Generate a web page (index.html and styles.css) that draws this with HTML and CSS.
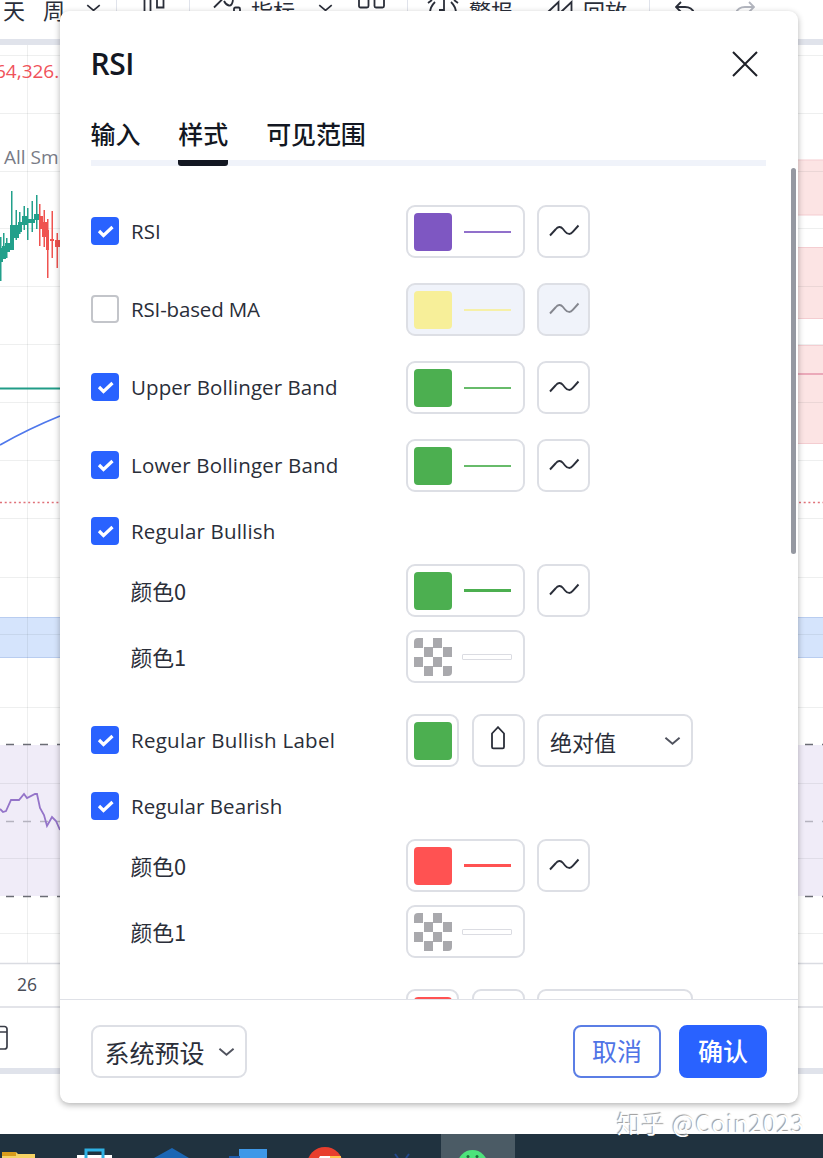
FILE: index.html
```
<!DOCTYPE html>
<html lang="zh-CN">

<head>
    <meta charset="UTF-8">
    <title>RSI</title>
    <link rel="stylesheet" href="styles.css">
</head>

<body>

    <!-- shared icons -->
    <svg class="icon-defs" width="0" height="0">
        <symbol id="check" viewBox="0 0 28 28">
            <path d="M8 14l4.500 4.500L21.500 10" fill="none" stroke="#fff" stroke-width="3.200" />
        </symbol>
        <symbol id="wave" viewBox="0 0 32 16">
            <path d="M2 13.500L7.500 7.500C10 4.500 12.500 4 15 7L17 9.500C19.500 12.700 22.500 12.700 25 9.700L30.500 3.500" fill="none" stroke="currentColor" stroke-width="1.900" />
        </symbol>
        <symbol id="chevron" viewBox="0 0 18 10">
            <path d="M1.500 1.500L9 8l7.500-6.500" fill="none" stroke="currentColor" stroke-width="2" />
        </symbol>
        <symbol id="tag" viewBox="0 0 14 24">
            <path d="M1 7.500L7 1.200l6 6.300v13.500a1.300 1.300 0 0 1-1.300 1.300H2.300A1.300 1.300 0 0 1 1 21z" fill="none" stroke="currentColor" stroke-width="1.800" />
        </symbol>
    </svg>

    <div class="page">
        <div class="toolbar">
            <span class="day">天</span>
            <span class="week">周</span>
            <svg class="arrow" width="15" height="10"><use href="#chevron" /></svg>
            <i class="sep"></i>
            <svg class="candles" width="24" height="22" viewBox="0 0 24 22" fill="none" stroke="#2a2e39" stroke-width="1.800"><path d="M1.500 0v22M7.500 0v22M14 0v8.500h6.500V0" /></svg>
            <i class="sep"></i>
            <svg class="fx" width="30" height="22" viewBox="0 0 30 22" fill="none" stroke="#2a2e39" stroke-width="1.800"><path d="M1 8.500l8-8M11 2q2 4 5 4.500T20 1M21 14v-4q0-1.500 1.500-1.500h3q1.500 0 1.500 1.500v4" /></svg>
            <span>指标</span>
            <svg class="arrow2" width="15" height="10"><use href="#chevron" /></svg>
            <svg class="layout" width="28" height="22" viewBox="0 0 28 22" fill="none" stroke="#2a2e39" stroke-width="1.800"><rect x="1" y="-3" width="9.500" height="11.500" rx="1.500" /><rect x="16.500" y="-3" width="9.500" height="11.500" rx="1.500" /></svg>
            <i class="sep sep3"></i>
            <svg class="alarm" width="32" height="22" viewBox="0 0 32 22" fill="none" stroke="#2a2e39" stroke-width="1.800"><path d="M1 4l4-3M31 4l-4-3M3 14q0-6 5-11M29 14q0-6-5-11M17 1v10h-5" /></svg>
            <span class="alarm-text">警报</span>
            <svg class="rewind" width="27" height="22" viewBox="0 0 27 22" fill="none" stroke="#2a2e39" stroke-width="1.800"><path d="M1 13L11.500 3v14M14 13L24.500 3v14" /></svg>
            <span>回放</span>
            <i class="sep sep4"></i>
            <svg class="undo" width="20" height="20" viewBox="0 0 20 20" fill="none" stroke="#2a2e39" stroke-width="1.800"><path d="M6 2L1 7l5 5M1 7h9q7 0 9 6" /></svg>
            <svg class="redo" width="20" height="20" viewBox="0 0 20 20" fill="none" stroke="#b2b5be" stroke-width="1.800"><path d="M14 2l5 5-5 5M19 7h-9q-7 0-9 6" /></svg>
        </div>

        <svg class="chart" width="823" height="1089" viewBox="0 45 823 1089">
            <!-- zones -->
            <g fill="#fce4e4" stroke="#f4cdd1">
                <path d="M790 160h40v55h-40zM790 247.500h40v71h-40zM790 345.500h40v98h-40z" />
            </g>
            <path d="M-2 617.500h827v40H-2z" fill="#d5e4fc" stroke="#b9cdf0" />
            <path d="M0 745h823v151H0z" fill="#f0ecf8" />

            <!-- grid -->
            <path d="M27.500 45v918M0 55.500h823M0 113.500h823M0 171.500h823M0 228.500h823M0 286.500h823M0 344.500h823M0 402.500h823M0 460.500h823M0 518.500h823M0 577.500h823M0 634.500h823M0 707.500h823M0 783.500h823M0 858.500h823M0 933.500h823" stroke="#2a2e39" stroke-opacity=".08" />

            <!-- candles -->
            <g fill="#22a08b">
                <path d="M0 237h1.500v44H0zM3 233h1.500v20H3zM6 238h1.500v20H6zM11 191h1.500v58H11zM15.500 210h1.500v30h-1.500zM19 212h1.500v22H19zM23.500 206h1.500v24h-1.500zM27 208h1.500v32H27zM31.500 201h1.500v31h-1.500zM36 195h1.500v34H36z" />
                <path d="M0 248h3v14H0zM2 246h4v13H2zM5 243h5v9H5zM10 225h4v25h-4zM13 225h6v13h-6zM18 222h4v10h-4zM22 216h6v9h-6zM28 219h7v4h-7zM34 214h6v6h-6z" />
            </g>
            <g fill="#ef5350">
                <path d="M39 204h1.500v42H39zM43.500 210h1.500v37h-1.500zM47 219h1.500v59H47zM51.500 211h1.500v47h-1.500zM56.500 233h1.500v35h-1.500z" />
                <path d="M39 216h4v13h-4zM42 222h5v15h-5zM46 230h3v20h-3zM50 239h4v2h-4zM55 240h5v7h-5z" />
            </g>

            <g fill="none">
                <path d="M0 388.500h60" stroke="#219c87" stroke-width="1.800" />
                <path d="M0 445Q28 429 60 416" stroke="#4f78ec" stroke-width="1.800" />
                <path d="M0 502.500h823" stroke="#e07078" stroke-width="1.500" stroke-dasharray="2 2.700" />
                <path d="M790 374h40" stroke="#eba9b9" stroke-width="1.800" />
                <path d="M-11 744.500h834M-11 896.500h834" stroke="#6b6d75" stroke-width="1.400" stroke-dasharray="8 9" />
                <path d="M-11 821.500h834" stroke="#b5b3bf" stroke-width="1.400" stroke-dasharray="8 9" />
                <path d="M0 809l3 3 3-1 5-11h8l5-6 3 4 8-4 2 0 3 14 4 7 3 11 5-9 4 4 4 9" stroke="#9474c9" stroke-width="1.800" />
            </g>

            <!-- axis and bottom panel -->
            <path d="M0 963.500h823M0 1007h823" stroke="#dadce2" stroke-width="1.500" />
            <path d="M0 1068h823v6H0z" fill="#e0e3eb" />
            <text x="17" y="991" class="axis-label">26</text>
            <path d="M-8 1026.500H4.500a2.500 2.500 0 0 1 2.500 2.500v17.500a2.500 2.500 0 0 1-2.500 2.500H-8M-8 1032H7" fill="none" stroke="#3a3d47" stroke-width="1.700" />
            <text x="-5" y="78" class="price">64,326.</text>
            <text x="4" y="164" class="study">All Sm</text>
        </svg>

        <div class="taskbar">
            <svg width="823" height="24" viewBox="0 0 823 24">
                <path d="M441 0h74v24h-74z" fill="#4b5b65" />
                <path d="M2 18h14l2 2h17v4H2z" fill="#f6d365" />
                <path d="M2 18h14v4H2z" fill="#d99c1b" />
                <path d="M77 21h35v3H77z" fill="#fff" />
                <path d="M86 24v-8h17v8" fill="none" stroke="#2fb1e4" stroke-width="3" />
                <path d="M154 24l18-10 17 10z" fill="#1b66b4" />
                <path d="M239 15h28v9h-28z" fill="#3f98e8" />
                <path d="M229 22h11v2h-11z" fill="#1d5aa8" />
                <circle cx="325" cy="31" r="18" fill="#e83e2d" />
                <path d="M321 22h20v2h-22z" fill="#ffc24a" />
                <path d="M320 22h10v2h-11z" fill="#fff" />
                <path d="M395 20l3 4M409 20l-3 4" stroke="#24488a" stroke-width="2" />
                <circle cx="472.500" cy="31" r="15" fill="#4de37b" />
                <circle cx="468" cy="22.500" r="1.500" fill="#1d6b3a" />
                <circle cx="477" cy="22.500" r="1.500" fill="#1d6b3a" />
            </svg>
        </div>
    </div>

    <div class="dialog">
        <div class="header">
            <h2>RSI</h2>
            <svg class="close" width="26" height="26" viewBox="0 0 26 26"><path d="M1 1l24 24M25 1L1 25" stroke="#1e2028" stroke-width="2" /></svg>
        </div>

        <div class="tabs">
            <span class="tab">输入</span>
            <span class="tab active">样式</span>
            <span class="tab">可见范围</span>
        </div>

        <div class="content">
            <div class="row">
                <div class="name"><svg class="checkbox on"><use href="#check" /></svg><span>RSI</span></div>
                <div class="box line purple"><i class="swatch"></i><i class="stroke"></i></div>
                <div class="box"><svg class="wave"><use href="#wave" /></svg></div>
            </div>
            <div class="row plot">
                <div class="name"><i class="checkbox"></i><span class="tight">RSI-based MA</span></div>
                <div class="box line yellow disabled"><i class="swatch"></i><i class="stroke"></i></div>
                <div class="box disabled"><svg class="wave"><use href="#wave" /></svg></div>
            </div>
            <div class="row plot">
                <div class="name"><svg class="checkbox on"><use href="#check" /></svg><span>Upper Bollinger Band</span></div>
                <div class="box line green"><i class="swatch"></i><i class="stroke"></i></div>
                <div class="box"><svg class="wave"><use href="#wave" /></svg></div>
            </div>
            <div class="row plot">
                <div class="name"><svg class="checkbox on"><use href="#check" /></svg><span class="wide">Lower Bollinger Band</span></div>
                <div class="box line green"><i class="swatch"></i><i class="stroke"></i></div>
                <div class="box"><svg class="wave"><use href="#wave" /></svg></div>
            </div>

            <div class="row">
                <div class="name"><svg class="checkbox on"><use href="#check" /></svg><span class="wide">Regular Bullish</span></div>
            </div>
            <div class="row first-color">
                <div class="name color-name">颜色0</div>
                <div class="box line green thick"><i class="swatch"></i><i class="stroke"></i></div>
                <div class="box"><svg class="wave"><use href="#wave" /></svg></div>
            </div>
            <div class="row">
                <div class="name color-name">颜色1</div>
                <div class="box line empty"><i class="swatch"></i><i class="stroke"></i></div>
            </div>
            <div class="row label-row">
                <div class="name"><svg class="checkbox on"><use href="#check" /></svg><span class="wider">Regular Bullish Label</span></div>
                <div class="box green"><i class="swatch"></i></div>
                <div class="box"><svg class="tag"><use href="#tag" /></svg></div>
                <div class="box select"><span>绝对值</span><svg class="chevron"><use href="#chevron" /></svg></div>
            </div>

            <div class="row">
                <div class="name"><svg class="checkbox on"><use href="#check" /></svg><span>Regular Bearish</span></div>
            </div>
            <div class="row first-color">
                <div class="name color-name">颜色0</div>
                <div class="box line red thick"><i class="swatch"></i><i class="stroke"></i></div>
                <div class="box"><svg class="wave"><use href="#wave" /></svg></div>
            </div>
            <div class="row">
                <div class="name color-name">颜色1</div>
                <div class="box line empty"><i class="swatch"></i><i class="stroke"></i></div>
            </div>
            <div class="row label-row">
                <div class="name"></div>
                <div class="box red"><i class="swatch"></i></div>
                <div class="box"></div>
                <div class="box select"></div>
            </div>
            <div class="scrollbar"></div>
        </div>

        <div class="footer">
            <div class="box select preset"><span>系统预设</span><svg class="chevron"><use href="#chevron" /></svg></div>
            <button class="cancel">取消</button>
            <button class="ok">确认</button>
        </div>
    </div>

    <div class="watermark">知乎 @Coin2023</div>

</body>

</html>
```

FILE: styles.css
```
* {
    box-sizing: border-box;
}

body {
    margin: 0;
    position: relative;
    width: 823px;
    height: 1158px;
    overflow: hidden;
    background: #fff;
    color: #2a2e39;
    font-family: "Open Sans", "Noto Sans CJK SC", sans-serif;
}

svg {
    display: block;
    flex: none;
}

.icon-defs {
    position: absolute;
}

.page {
    display: flex;
    flex-direction: column;
}

/* top toolbar */
.toolbar {
    display: flex;
    align-items: center;
    height: 45px;
    padding: 0 0 20px 3px;
    border-bottom: 6px solid #e0e3eb;
    font-family: "Noto Sans CJK SC", sans-serif;
    font-size: 22px;
    line-height: 22px;
    white-space: nowrap;
}

.toolbar span {
    flex: none;
}

.toolbar .day,
.toolbar .week {
    margin-top: -2px;
}

.week {
    margin-left: 18px;
}

.arrow {
    margin: -4px 0 0 21px;
}

.sep {
    flex: none;
    width: 1px;
    height: 22px;
    margin-left: 15px;
    background: #e0e3eb;
}

.candles {
    margin: 0 7px 0 26px;
}

.fx {
    margin: 0 8px 0 23px;
}

.arrow2 {
    margin: -4px 0 0 23px;
}

.layout {
    margin-left: 25px;
}

.sep3 {
    margin-left: 21px;
}

.alarm {
    margin-left: 19px;
}

.alarm-text {
    margin-left: 10px;
}

.rewind {
    margin: 0 9px 0 34px;
}

.sep4 {
    margin-left: 22px;
}

.undo {
    margin-left: 25px;
}

.redo {
    margin-left: 40px;
}

/* chart behind the dialog */
.axis-label,
.price,
.study {
    font-family: "Open Sans", sans-serif;
    font-size: 18.500px;
    fill: #4a4d57;
}

.axis-label {
    font-size: 17.500px;
}

.price {
    fill: #f0525a;
    font-size: 19px;
}

.study {
    fill: #787b86;
    font-size: 19px;
}

.taskbar {
    height: 24px;
    background: #20323f;
}

/* dialog */
.dialog {
    position: absolute;
    left: 59.500px;
    top: 11px;
    width: 738.500px;
    height: 1092px;
    display: flex;
    flex-direction: column;
    background: #fff;
    border-radius: 9px;
    box-shadow: 0 2px 6px rgba(0, 0, 0, 0.3);
}

.header {
    display: flex;
    align-items: center;
    justify-content: space-between;
    height: 106px;
    padding: 0 40px 0 31px;
}

h2 {
    margin: -2px 0 0;
    color: #131722;
    font-size: 30px;
    font-weight: 600;
    letter-spacing: -0.5px;
}

.tabs {
    display: flex;
    gap: 38px;
    height: 50px;
    margin: -1px 32px 0 31px;
    border-bottom: 6px solid #f0f3fa;
}

.tab {
    height: 50px;
    color: #131722;
    font-family: "Noto Sans CJK SC", sans-serif;
    font-size: 25px;
    font-weight: 500;
    line-height: 34px;
    letter-spacing: -0.100px;
}

.active {
    border-bottom: 6px solid #131722;
    border-radius: 3px;
}

.content {
    position: relative;
    display: flex;
    flex-direction: column;
    flex: 1;
    gap: 13px;
    min-height: 0;
    padding: 39px 0 0 31px;
    overflow: hidden;
}

.row {
    display: flex;
    flex: none;
    gap: 12.500px;
    height: 53px;
}

.plot {
    margin-top: 12px;
}

.first-color {
    margin-top: -7px;
}

.label-row {
    margin-top: 18px;
}

.name {
    display: flex;
    align-items: center;
    gap: 12.500px;
    width: 303px;
    padding-bottom: 1px;
    font-size: 20.500px;
    white-space: nowrap;
}

.name span {
    margin-top: -1px;
    letter-spacing: 0.080px;
}

.name .tight {
    letter-spacing: -0.150px;
}

.name .wide {
    letter-spacing: 0.180px;
}

.name .wider {
    letter-spacing: 0.270px;
}

.color-name {
    padding: 0 0 1px 40px;
    font-family: "Noto Sans CJK SC", sans-serif;
    font-size: 21.800px;
}

.checkbox {
    width: 28px;
    height: 28px;
    border: 2px solid #c3c5ca;
    border-radius: 4px;
}

.checkbox.on {
    border: none;
    background: #2962ff;
}

.box {
    display: flex;
    align-items: center;
    justify-content: center;
    flex: none;
    width: 53px;
    height: 53px;
    border: 2px solid #dddfe5;
    border-radius: 9px;
}

.line {
    width: 118.500px;
    justify-content: flex-start;
    padding-left: 6px;
}

.disabled {
    background: #f0f3fa;
}

.swatch {
    width: 38px;
    height: 38px;
    border-radius: 4px;
    background: var(--color);
}

.stroke {
    width: 47px;
    height: 2px;
    margin-left: 12px;
    background: var(--color);
    opacity: 0.85;
}

.thick .stroke {
    height: 3px;
    opacity: 1;
}

.purple {
    --color: #7e57c2;
}

.yellow {
    --color: #f7ef99;
}

.green {
    --color: #4caf50;
}

.red {
    --color: #ff5252;
}

.empty .swatch {
    background: repeating-conic-gradient(#fff 0 25%, #a9a9ad 0 50%) 0 0 / 19px 19px;
}

.empty .stroke {
    width: 50px;
    height: 6px;
    margin-left: 10px;
    border: 1.500px solid #d5d7dd;
    border-radius: 1px;
    background: #fff;
}

.wave {
    width: 32px;
    height: 16px;
    margin-top: -3px;
}

.disabled .wave {
    color: #85878f;
}

.tag {
    width: 14px;
    height: 24px;
    margin-top: -5px;
}

.select {
    width: 156px;
    justify-content: space-between;
    padding: 0 10px 0 11px;
    font-family: "Noto Sans CJK SC", sans-serif;
    font-size: 22px;
}

.chevron {
    width: 17px;
    height: 10px;
    color: #50535e;
}

.scrollbar {
    position: absolute;
    right: 2px;
    top: 2px;
    width: 5px;
    height: 386px;
    border-radius: 3px;
    background: #9598a1;
}

.footer {
    display: flex;
    align-items: center;
    height: 104px;
    padding: 0 31px;
    border-top: 1px solid #dfe1e7;
}

.preset {
    margin-right: auto;
    padding: 0 10px 0 12px;
    font-size: 25px;
}

button {
    width: 88px;
    height: 53px;
    padding: 0 0 4px;
    border: 2px solid #2962ff;
    border-radius: 8px;
    font-family: "Noto Sans CJK SC", sans-serif;
    font-size: 25px;
    line-height: 36px;
}

.cancel {
    margin-right: 18px;
    background: #fff;
    color: #4f74e6;
    border-color: #5b7ee5;
}

.ok {
    background: #2962ff;
    color: #fff;
    font-weight: 500;
}

.watermark {
    position: absolute;
    left: 617px;
    top: 1106px;
    color: #fff;
    font-family: "Noto Sans CJK SC", sans-serif;
    font-size: 24px;
    line-height: 34px;
    letter-spacing: 0.600px;
    white-space: nowrap;
    text-shadow: -1px -1px 1px #999;
}
```
